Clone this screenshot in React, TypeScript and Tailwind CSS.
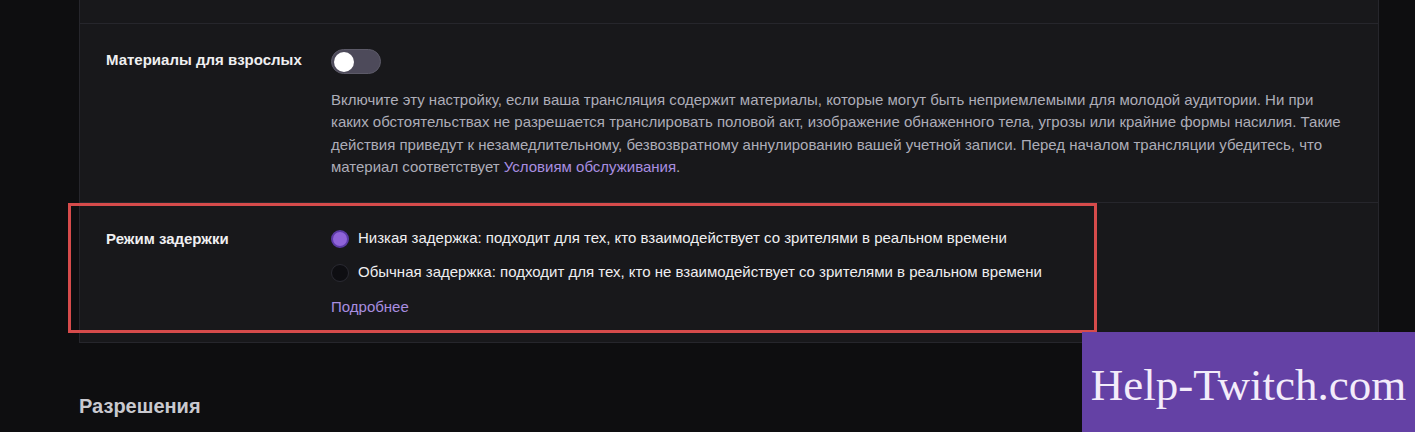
import React from "react";

export default function App() {
  return (
    <div className="relative w-[1415px] h-[432px] overflow-hidden bg-[#0e0e10] font-['Liberation_Sans',Arial,sans-serif]">
      <div className="ml-[79px] w-[1300px] bg-[#18181b] border-x border-b border-[#26262c]">
        <div className="h-[24px] border-b border-[#26262c]" />
        <div className="flex px-[26px] pt-[25px] pb-[23px] border-b border-[#26262c]">
          <div className="w-[225px] shrink-0 text-[15px] leading-[20px] font-bold text-[#efeff1] pt-[1px]">
            Материалы для взрослых
          </div>
          <div className="flex-1 flex flex-col">
            <div className="w-[50px] h-[25px] rounded-full bg-[#4d4a5a] border border-[#5c5a68] flex items-center px-[2px]">
              <div className="w-[20px] h-[20px] rounded-full bg-white" />
            </div>
            <p className="mt-[15px] text-[15px] leading-[22.4px] text-[#adadb8]">
              Включите эту настройку, если ваша трансляция содержит материалы, которые могут быть неприемлемыми для молодой аудитории. Ни при каких обстоятельствах не разрешается транслировать половой акт, изображение обнаженного тела, угрозы или крайние формы насилия. Такие действия приведут к незамедлительному, безвозвратному аннулированию вашей учетной записи. Перед началом трансляции убедитесь, что материал соответствует <span className="text-[#a88ee0]">Условиям обслуживания</span>.
            </p>
          </div>
        </div>
        <div className="flex px-[26px] pt-[27px] pb-[25px]">
          <div className="w-[225px] shrink-0 text-[15px] leading-[18px] font-bold text-[#efeff1]">
            Режим задержки
          </div>
          <div className="flex-1 flex flex-col">
            <div className="flex items-center h-[18px] gap-[9px]">
              <div className="w-[18px] h-[18px] rounded-full border-2 border-[#5b3aa6] bg-[#8f63d9]" />
              <span className="text-[15px] text-[#efeff1]">
                Низкая задержка: подходит для тех, кто взаимодействует со зрителями в реальном времени
              </span>
            </div>
            <div className="flex items-center h-[18px] gap-[9px] mt-[16px]">
              <div className="w-[18px] h-[18px] rounded-full border border-[#2a2a32] bg-[#0e0e12]" />
              <span className="text-[15px] text-[#efeff1]">
                Обычная задержка: подходит для тех, кто не взаимодействует со зрителями в реальном времени
              </span>
            </div>
            <div className="mt-[15px] text-[15px] leading-[20px] text-[#a88ee0]">Подробнее</div>
          </div>
        </div>
      </div>
      <div className="ml-[79px] mt-[51px] text-[20px] leading-[24px] font-bold text-[#c9c9cf]">
        Разрешения
      </div>

      <div className="absolute left-[68px] top-[203px] w-[1029px] h-[130px] border-[3px] border-[#d64b4b]" />

      <div className="absolute left-[1082px] top-[332px] w-[333px] h-[100px] bg-[#6441a5] flex items-center justify-center">
        <span className="font-['Liberation_Serif','Times_New_Roman',serif] text-[45px] leading-none text-[#f3ecfa] mt-[6px]">
          Help-Twitch.com
        </span>
      </div>
    </div>
  );
}
